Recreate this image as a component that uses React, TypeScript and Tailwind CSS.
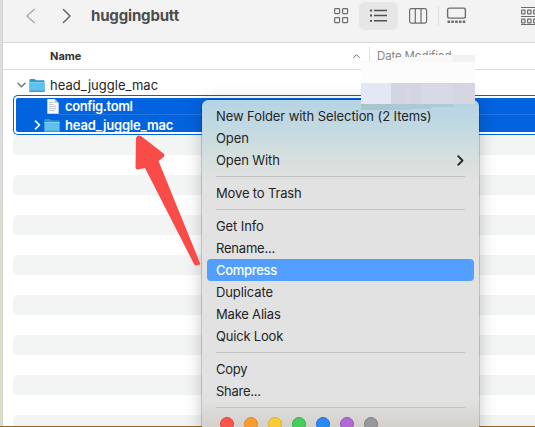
import React from "react";

function Folder() {
  return (
    <svg width="16" height="15" viewBox="0 0 16 15" className="shrink-0">
      <path d="M.5 2Q.5 1 1.5 1h4l1.3 1.2h7.7q1 0 1 1V13.5H.5z" fill="#2f97cc" />
      <path d="M.5 4h15v9.5q0 .5-.6.5H1.1q-.6 0-.6-.5z" fill="#5fc1ec" />
      <path d="M.5 4h15v1H.5z" fill="#7bd0f4" />
      <path d="M.5 12.5h15v1q0 .5-.6.5H1.1q-.6 0-.6-.5z" fill="#3f9fcc" />
    </svg>
  );
}

function FileIcon() {
  return (
    <svg width="12" height="15" viewBox="0 0 12 15" className="shrink-0">
      <path d="M.3 0h7.5L11.7 4v10.7H.3z" fill="#f7f7f7" />
      <path d="M7.5 0v4h4z" fill="#c9cbd0" />
      <path d="M2 3.5h4M2 5.5h5M2 7.5h7M2 9.5h7M2 11.5h6" stroke="#b9bcc1" strokeWidth=".8" />
    </svg>
  );
}

function Chevron({ d, w, h, color, sw }: { d: string; w: number; h: number; color: string; sw: number }) {
  return (
    <svg width={w} height={h} viewBox={`0 0 ${w} ${h}`} fill="none" stroke={color} strokeWidth={sw} strokeLinecap="round" strokeLinejoin="round" className="shrink-0">
      <path d={d} />
    </svg>
  );
}

function Item({ label, track, active, arrow }: { label: string; track: string; active?: boolean; arrow?: boolean }) {
  return (
    <div className={`mx-[5px] flex h-[22px] shrink-0 items-center justify-between rounded-[4px] pr-[10px] pl-[9px] ${active ? "bg-[#529fff] font-medium text-white" : "text-[#232425]"}`}>
      <span className={`-mt-px whitespace-nowrap ${track}`}>{label}</span>
      {arrow && <Chevron w={7} h={11} d="M1.2 1.2 5.5 5.5 1.2 9.8" color="#242526" sw={1.8} />}
    </div>
  );
}

function Separator() {
  return (
    <div className="mx-[14px] h-[11px] shrink-0 pt-[5px]">
      <div className="h-px bg-[#c3c3c3]" />
    </div>
  );
}

const stripes = Array.from({ length: 15 }, (_, i) => i);
const tags = [
  ["#fd544e", "#d9463f"],
  ["#fa9d2e", "#dc8726"],
  ["#f8cd33", "#d9b02a"],
  ["#45ce5b", "#39ae4b"],
  ["#2b87fb", "#2271d6"],
  ["#b169d5", "#9657b6"],
  ["#97979c", "#7f7f84"],
];

export default function App() {
  return (
    <div className="relative flex h-[427px] w-[535px] overflow-hidden bg-white font-['Inter',sans-serif] text-[13px] leading-[20px]">
      <div className="w-[3px] shrink-0 border-r border-[#d2d2ce] bg-linear-to-b from-[#dddddd] from-40% to-[#dfdfc6] to-75%" />
      <div className="flex min-w-0 flex-1 flex-col">
        <header className="flex h-[43px] shrink-0 items-start border-b border-[#d8d8d8] bg-[#f3f3f3]">
          <div className="flex h-[31px] w-[88px] shrink-0 items-center pl-[22px]">
            <Chevron w={10} h={16} d="M9.2 1.5 1.8 8 9.2 14.5" color="#aaaaaa" sw={1.4} />
            <span className="w-[27px]" />
            <Chevron w={10} h={16} d="M1.5 1.5 8 8 1.5 14.5" color="#666666" sw={1.5} />
          </div>
          <h1 className="w-[242px] shrink-0 pt-[6px] text-[15px] font-bold tracking-[-0.16px] text-[#4c4c4c]">huggingbutt</h1>
          <svg width="202" height="42" viewBox="333 0 202 42" fill="none" stroke="#6d6d6d" strokeWidth="1.2">
            <rect x="359" y="2" width="39" height="28" rx="6" fill="#e6e6e6" stroke="none" />
            <rect x="334.6" y="8.6" width="5" height="5" rx=".8" />
            <rect x="342.6" y="8.6" width="5" height="5" rx=".8" />
            <rect x="334.6" y="17.6" width="5" height="5" rx=".8" />
            <rect x="342.6" y="17.6" width="5" height="5" rx=".8" />
            <path d="M374 10.5h13M374 15.5h13M374 20.8h13" stroke="#505050" strokeWidth="1.4" />
            <path d="M370 10.5h2M370 15.5h2M370 20.8h2" stroke="#505050" strokeWidth="1.8" />
            <rect x="409.6" y="8.6" width="17" height="14.5" rx="1.8" />
            <path d="M415.3 9v14M421 9v14" />
            <path d="M438.5 6v20" stroke="#e0e0e0" strokeWidth="1" />
            <rect x="447.6" y="8.1" width="17.8" height="10" rx="1.8" strokeWidth="1.4" />
            <path d="M447.5 21.8h18" strokeWidth="2.6" strokeDasharray="2.6 1.2" />
            <path d="M521 7.5h18M521 16.5h18M521 24.5h18" strokeWidth="1" />
            <rect x="521.6" y="10.1" width="3.4" height="3.8" rx=".5" />
            <rect x="527.6" y="10.1" width="3.4" height="3.8" rx=".5" />
            <rect x="533.6" y="10.1" width="3.4" height="3.8" rx=".5" />
            <rect x="521.6" y="19.1" width="3.4" height="3.8" rx=".5" />
            <rect x="527.6" y="19.1" width="3.4" height="3.8" rx=".5" />
            <rect x="533.6" y="19.1" width="3.4" height="3.8" rx=".5" />
          </svg>
        </header>
        <div className="flex h-[27px] shrink-0 items-center border-b border-[#dcdcdc] text-[11px]">
          <span className="-mt-px w-[302px] shrink-0 pl-[47px] font-bold text-[#343434]">Name</span>
          <div className="-mt-px flex w-[64px] shrink-0 items-center pl-[47px]">
            <Chevron w={9} h={6} d="M1.5 4.8 4.5 1.5 7.5 4.8" color="#777777" sw={1} />
          </div>
          <span className="mt-[2px] h-5 w-px bg-[#e1e1e1]" />
          <span className="-mt-px pl-[7px] text-[11.5px] tracking-[-0.15px] whitespace-nowrap text-[#858585]">Date Modified</span>
        </div>
        <div className="mt-[5px] flex h-5 shrink-0 items-center pl-[14px]">
          <Chevron w={9} h={6} d="M1 1.2 4.5 4.7 8 1.2" color="#777777" sw={1.5} />
          <span className="w-[3px]" />
          <Folder />
          <span className="pl-[5px] tracking-[0.02px] text-[#252525]">head_juggle_mac</span>
        </div>
        <div className="ml-[10px] h-10 shrink-0 rounded-l-[5px] border border-r-0 border-[#0263df] bg-white py-[2px] pl-[2px] font-semibold text-white">
          <div className="flex h-full flex-col rounded-l-[2px] bg-[#0263df]">
            <div className="flex h-[16px] items-center pl-[31px]">
              <FileIcon />
              <span className="-mt-px pl-[6px] tracking-[-0.38px]">config.toml</span>
            </div>
            <div className="ml-[42px] h-px shrink-0 bg-[#2377e4]" />
            <div className="flex h-[17px] items-center pt-[3px] pl-[18px]">
              <Chevron w={7} h={10} d="M1.5 1.2 5.5 5 1.5 8.8" color="#ffffff" sw={1.7} />
              <span className="w-[3px]" />
              <Folder />
              <span className="-mt-px pl-[5px] tracking-[-0.18px]">head_juggle_mac</span>
            </div>
          </div>
        </div>
        <div className="flex flex-1 flex-col overflow-hidden pl-[10px]">
          {stripes.map((i) => (
            <div key={i} className={`h-5 shrink-0 rounded-l-[5px] ${i % 2 === 0 ? "bg-[#f3f5f4]" : "bg-white"}`} />
          ))}
        </div>
      </div>
      <div className="absolute bottom-0 left-0 h-px w-full bg-[#a06915]" />

      <div className="absolute top-[100px] left-[202px] flex h-[350px] w-[277px] flex-col rounded-t-[6px] bg-[linear-gradient(to_bottom,#b5d3e4_0px,#c6dbe1_35px,#d5dfdd_55px,#e2e2e2_85px,#e2e2e2_300px,#d4d0ca_328px)] pt-[5px] shadow-[0_3px_18px_rgba(0,0,0,0.23),0_0_0_0.5px_rgba(0,0,0,0.3)]">
        <Item label="New Folder with Selection (2 Items)" track="tracking-[-0.08px]" />
        <Item label="Open" track="tracking-[-0.1px]" />
        <Item label="Open With" track="tracking-[-0.1px]" arrow />
        <Separator />
        <Item label="Move to Trash" track="tracking-[-0.15px]" />
        <Separator />
        <Item label="Get Info" track="tracking-[-0.1px]" />
        <Item label="Rename..." track="tracking-[-0.2px]" />
        <Item label="Compress" track="tracking-[-0.3px]" active />
        <Item label="Duplicate" track="tracking-[-0.1px]" />
        <Item label="Make Alias" track="tracking-[-0.2px]" />
        <Item label="Quick Look" track="tracking-[-0.2px]" />
        <Separator />
        <Item label="Copy" track="tracking-[-0.25px]" />
        <Item label="Share..." track="tracking-[-0.25px]" />
        <Separator />
        <div className="flex gap-[10px] pt-[4px] pl-[18px]">
          {tags.map(([fill, edge]) => (
            <span key={fill} className="size-[14px] shrink-0 rounded-full border" style={{ background: fill, borderColor: edge }} />
          ))}
        </div>
      </div>

      <svg className="absolute top-[50px] left-[361px]" width="120" height="65" viewBox="361 50 120 65" shapeRendering="crispEdges">
        <path d="M361 61h30v-3h10v-1h19v-2h55v10h-8v-2H361z" fill="#f8f8f8" />
        <path d="M453 55h22v7h-22z" fill="#f2f2f2" />
        <path d="M361 62h114v21H361z" fill="#fcfcfc" />
        <path d="M361 83h30v21h-30z" fill="#e4e7f4" />
        <path d="M391 83h84v21h-84z" fill="#d3d5e1" />
        <path d="M421 83h32v21h-32z" fill="#d7d9e6" />
        <path d="M404 83h8v21h-8zM463 83h12v21h-12z" fill="#d5d6e1" />
        <path d="M361 104h92v3h-22v2h-20v1h-50z" fill="#a9c5d0" />
        <path d="M391 104h62v3h-22v2h-20v1h-20z" fill="#aec9d4" />
      </svg>
      <svg className="absolute top-[130px] left-[130px]" width="75" height="140" viewBox="130 130 75 140">
        <path d="M141 136 163.5 153.5Q165.5 156 163 157.5L158.5 161 200 263Q200.5 264.5 199 265L196 265.5Q195 265.5 194 264L145 168 138 169.5Q135.5 169.5 135.5 167L136 138.5Q137 134 141 136z" fill="#f94c48" />
      </svg>
    </div>
  );
}
